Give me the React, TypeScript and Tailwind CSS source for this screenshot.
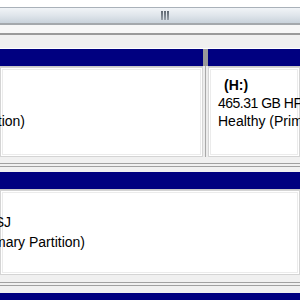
import React from "react";

const font = { fontFamily: '"Liberation Sans", Arial, sans-serif' };

function Partition({
  lines,
  className,
}: {
  lines: React.ReactNode;
  className?: string;
}) {
  return (
    <div className={"flex flex-col min-w-0 overflow-hidden " + (className ?? "")}>
      <div className="h-[17px] bg-[#000080] shrink-0" />
      <div className="h-px bg-[#c8c8c8] shrink-0" />
      <div className="flex-1 bg-white border border-[#d4d4d4] p-[1px]">
        <div className="h-full bg-white border border-[#ebebeb]">{lines}</div>
      </div>
    </div>
  );
}

export default function App() {
  return (
    <div
      className="w-[300px] h-[300px] overflow-hidden bg-white flex flex-col text-[14px] text-black"
      style={font}
    >
      <div className="h-[7px] bg-white shrink-0" />
      {/* splitter bar */}
      <div className="h-[18px] shrink-0 border-t border-[#a9b1b9] border-b-2 border-b-[#a4a8ac] bg-gradient-to-b from-[#f1f4f7] via-[#dfe5eb] to-[#c9d2db] flex items-center justify-center">
        <div className="flex gap-[1px] ml-[30px]">
          <div className="w-[2px] h-[9px] bg-gradient-to-b from-[#5d6670] to-[#9aa2aa]" />
          <div className="w-[2px] h-[9px] bg-gradient-to-b from-[#5d6670] to-[#9aa2aa]" />
          <div className="w-[2px] h-[9px] bg-gradient-to-b from-[#5d6670] to-[#9aa2aa]" />
        </div>
      </div>
      <div className="h-[8px] bg-[#f7f7f7] shrink-0" />
      <div className="h-[2px] bg-[#9a9a9a] shrink-0" />
      <div className="h-[13px] bg-[#f0f0f0] shrink-0" />
      <div className="h-px bg-white shrink-0" />
      {/* disk 1 */}
      <div className="h-[108px] shrink-0 flex bg-[#f0f0f0]">
        <Partition
          className="w-[203px] shrink-0"
          lines={
            <div className="pt-[42px] leading-[18px]">
              <div className="w-[22px] flex justify-end whitespace-nowrap">
                Healthy (Primary Partition)
              </div>
            </div>
          }
        />
        <div className="w-[5px] shrink-0 flex flex-col">
          <div className="h-[17px] bg-[#9a9a9a]" />
          <div className="flex-1 flex justify-center bg-[#ececec]">
            <div className="w-px bg-[#a8a8a8]" />
          </div>
        </div>
        <Partition
          className="flex-1"
          lines={
            <div className="pt-[6px] pl-[7px] leading-[18px] whitespace-nowrap">
              <div className="font-bold pl-[6px]">(H:)</div>
              <div className="tracking-[-0.5px]">465.31 GB HFS+</div>
              <div>Healthy (Primary Partition)</div>
            </div>
          }
        />
      </div>
      <div className="h-[15px] shrink-0 bg-[#f0f0f0] flex flex-col justify-center gap-[2px]">
        <div className="h-px bg-[#a0a0a0]" />
        <div className="h-px bg-[#a0a0a0]" />
      </div>
      {/* disk 2 */}
      <div className="h-[103px] shrink-0 flex bg-[#f0f0f0]">
        <Partition
          className="flex-1"
          lines={
            <div className="pt-[19px] leading-[20px] whitespace-nowrap">
              <div className="w-[8px] flex justify-end">JMICRON SJ</div>
              <div className="w-[82px] flex justify-end">
                Healthy (Primary Partition)
              </div>
            </div>
          }
        />
      </div>
      <div className="h-[18px] shrink-0 bg-[#f0f0f0] flex flex-col justify-center gap-[2px]">
        <div className="h-px bg-[#a0a0a0]" />
        <div className="h-px bg-[#a0a0a0]" />
      </div>
      <div className="flex-1 bg-[#000080]" />
    </div>
  );
}
